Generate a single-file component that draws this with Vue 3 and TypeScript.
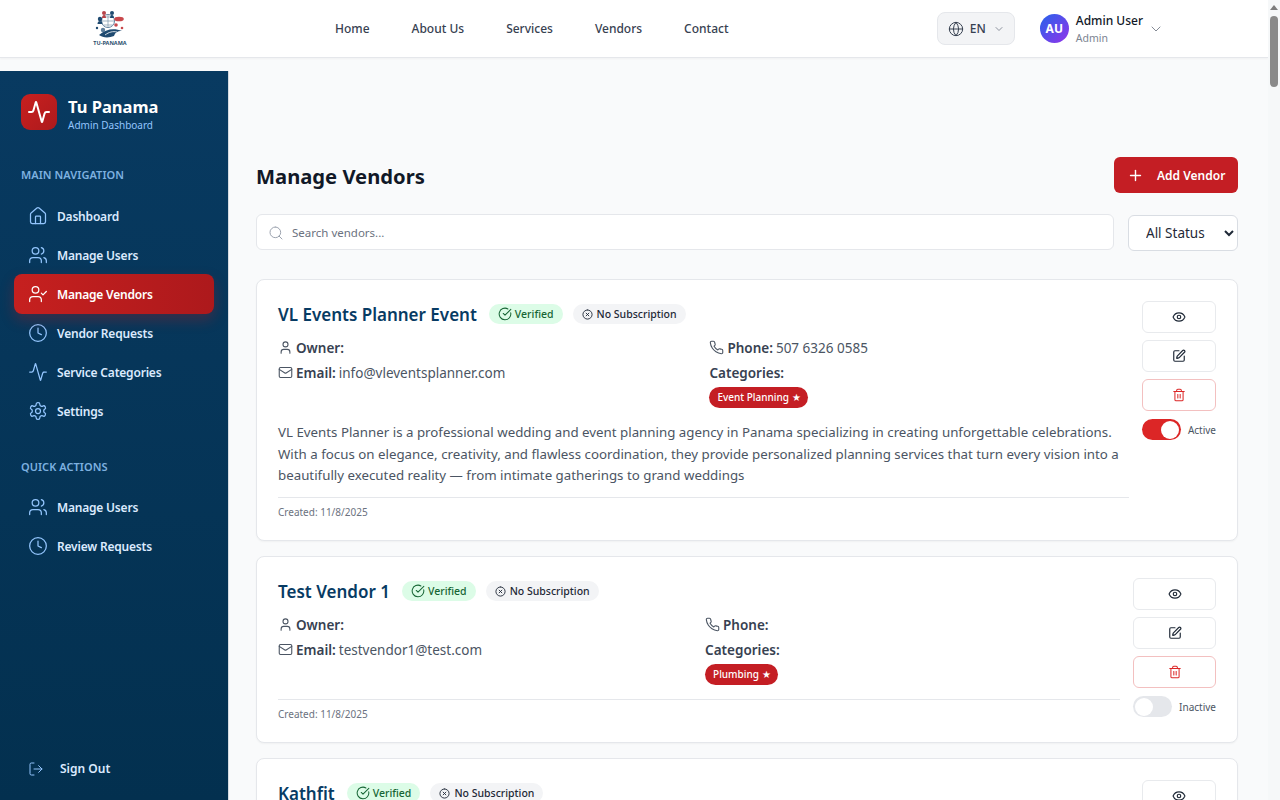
<script setup lang="ts">
import { h } from 'vue'

const iconPaths: Record<string, string[]> = {
  home: ['M15 21v-8a1 1 0 0 0-1-1h-4a1 1 0 0 0-1 1v8', 'M3 10a2 2 0 0 1 .709-1.528l7-5.999a2 2 0 0 1 2.582 0l7 5.999A2 2 0 0 1 21 10v9a2 2 0 0 1-2 2H5a2 2 0 0 1-2-2z'],
  users: ['M16 21v-2a4 4 0 0 0-4-4H6a4 4 0 0 0-4 4v2', 'M9 3a4 4 0 1 0 0 8 4 4 0 1 0 0-8', 'M22 21v-2a4 4 0 0 0-3-3.87', 'M16 3.13a4 4 0 0 1 0 7.75'],
  userCheck: ['M16 21v-2a4 4 0 0 0-4-4H6a4 4 0 0 0-4 4v2', 'M9 3a4 4 0 1 0 0 8 4 4 0 1 0 0-8', 'M16 11l2 2 4-4'],
  clock: ['M12 2a10 10 0 1 0 0 20 10 10 0 1 0 0-20', 'M12 6v6l4 2'],
  activity: ['M22 12h-2.48a2 2 0 0 0-1.93 1.46l-2.35 8.36a.25.25 0 0 1-.48 0L9.24 2.18a.25.25 0 0 0-.48 0l-2.35 8.36A2 2 0 0 1 4.49 12H2'],
  settings: ['M12.22 2h-.44a2 2 0 0 0-2 2v.18a2 2 0 0 1-1 1.73l-.43.25a2 2 0 0 1-2 0l-.15-.08a2 2 0 0 0-2.73.73l-.22.38a2 2 0 0 0 .73 2.73l.15.1a2 2 0 0 1 1 1.72v.51a2 2 0 0 1-1 1.74l-.15.09a2 2 0 0 0-.73 2.73l.22.38a2 2 0 0 0 2.73.73l.15-.08a2 2 0 0 1 2 0l.43.25a2 2 0 0 1 1 1.73V20a2 2 0 0 0 2 2h.44a2 2 0 0 0 2-2v-.18a2 2 0 0 1 1-1.73l.43-.25a2 2 0 0 1 2 0l.15.08a2 2 0 0 0 2.73-.73l.22-.39a2 2 0 0 0-.73-2.73l-.15-.08a2 2 0 0 1-1-1.74v-.5a2 2 0 0 1 1-1.74l.15-.09a2 2 0 0 0 .73-2.73l-.22-.38a2 2 0 0 0-2.73-.73l-.15.08a2 2 0 0 1-2 0l-.43-.25a2 2 0 0 1-1-1.73V4a2 2 0 0 0-2-2z', 'M12 9a3 3 0 1 0 0 6 3 3 0 1 0 0-6'],
  logOut: ['M9 21H5a2 2 0 0 1-2-2V5a2 2 0 0 1 2-2h4', 'M16 17l5-5-5-5', 'M21 12H9'],
  eye: ['M2.062 12.348a1 1 0 0 1 0-.696 10.75 10.75 0 0 1 19.876 0 1 1 0 0 1 0 .696 10.75 10.75 0 0 1-19.876 0', 'M12 9a3 3 0 1 0 0 6 3 3 0 1 0 0-6'],
  edit: ['M12 3H5a2 2 0 0 0-2 2v14a2 2 0 0 0 2 2h14a2 2 0 0 0 2-2v-7', 'M18.375 2.625a1 1 0 0 1 3 3l-9.013 9.014a2 2 0 0 1-.853.505l-2.873.84a.5.5 0 0 1-.62-.62l.84-2.873a2 2 0 0 1 .506-.852z'],
  trash: ['M3 6h18', 'M19 6v14c0 1-1 2-2 2H7c-1 0-2-1-2-2V6', 'M8 6V4c0-1 1-2 2-2h4c1 0 2 1 2 2v2', 'M10 11v6', 'M14 11v6'],
  search: ['M11 3a8 8 0 1 0 0 16 8 8 0 1 0 0-16', 'm21 21-4.3-4.3'],
  globe: ['M12 2a10 10 0 1 0 0 20 10 10 0 1 0 0-20', 'M12 2a14.5 14.5 0 0 0 0 20 14.5 14.5 0 0 0 0-20', 'M2 12h20'],
  chevron: ['m6 9 6 6 6-6'],
  plus: ['M5 12h14', 'M12 5v14'],
  user: ['M19 21v-2a4 4 0 0 0-4-4H9a4 4 0 0 0-4 4v2', 'M12 3a4 4 0 1 0 0 8 4 4 0 1 0 0-8'],
  mail: ['M4 4h16a2 2 0 0 1 2 2v12a2 2 0 0 1-2 2H4a2 2 0 0 1-2-2V6a2 2 0 0 1 2-2z', 'm22 7-8.97 5.7a1.94 1.94 0 0 1-2.06 0L2 7'],
  phone: ['M22 16.92v3a2 2 0 0 1-2.18 2 19.79 19.79 0 0 1-8.63-3.07 19.5 19.5 0 0 1-6-6 19.79 19.79 0 0 1-3.07-8.67A2 2 0 0 1 4.11 2h3a2 2 0 0 1 2 1.72 12.84 12.84 0 0 0 .7 2.81 2 2 0 0 1-.45 2.11L8.09 9.91a16 16 0 0 0 6 6l1.27-1.27a2 2 0 0 1 2.11-.45 12.84 12.84 0 0 0 2.81.7A2 2 0 0 1 22 16.92z'],
  verified: ['M21.801 10A10 10 0 1 1 17 3.335', 'm9 11 3 3L22 4'],
  xCircle: ['M12 2a10 10 0 1 0 0 20 10 10 0 1 0 0-20', 'm15 9-6 6', 'm9 9 6 6'],
}

const Icon = (props: { name: string; size?: number; stroke?: number }) =>
  h(
    'svg',
    {
      width: props.size ?? 16,
      height: props.size ?? 16,
      viewBox: '0 0 24 24',
      fill: 'none',
      stroke: 'currentColor',
      'stroke-width': props.stroke ?? 2,
      'stroke-linecap': 'round',
      'stroke-linejoin': 'round',
      style: 'flex-shrink:0',
    },
    iconPaths[props.name].map((d) => h('path', { d })),
  )
Icon.props = ['name', 'size', 'stroke']

const topLinks = ['Home', 'About Us', 'Services', 'Vendors', 'Contact']

const mainNav = [
  { label: 'Dashboard', icon: 'home' },
  { label: 'Manage Users', icon: 'users' },
  { label: 'Manage Vendors', icon: 'userCheck', active: true },
  { label: 'Vendor Requests', icon: 'clock' },
  { label: 'Service Categories', icon: 'activity' },
  { label: 'Settings', icon: 'settings' },
]

const quickNav = [
  { label: 'Manage Users', icon: 'users' },
  { label: 'Review Requests', icon: 'clock' },
]

const vendors = [
  {
    name: 'VL Events Planner Event',
    phone: '507 6326 0585',
    email: 'info@vleventsplanner.com',
    category: 'Event Planning',
    description:
      'VL Events Planner is a professional wedding and event planning agency in Panama specializing in creating unforgettable celebrations. With a focus on elegance, creativity, and flawless coordination, they provide personalized planning services that turn every vision into a beautifully executed reality — from intimate gatherings to grand weddings',
    active: true,
  },
  {
    name: 'Test Vendor 1',
    phone: '',
    email: 'testvendor1@test.com',
    category: 'Plumbing',
    description: '',
    active: false,
  },
  {
    name: 'Kathfit',
    phone: '',
    email: 'info@kathfit.com',
    category: 'Fitness',
    description: '',
    active: true,
  },
]
</script>

<template>
  <div class="screen">
    <div class="page">
      <header class="topbar">
        <div class="logo">
          <svg width="34" height="30" viewBox="0 0 34 30">
            <circle cx="15" cy="11" r="6.5" fill="#fff" stroke="#5f7f9c" stroke-width="1" />
            <path d="M8.5 11h13M15 4.500v13M10.500 7h9M10.500 15h9" stroke="#7d95ab" stroke-width=".7" />
            <circle cx="11" cy="3" r="2" fill="#b8444a" />
            <path d="M9 8c0-2 1-3 2-3s2 1 2 3z" fill="#b8444a" />
            <circle cx="19" cy="3" r="2" fill="#1f4a70" />
            <path d="M17 8c0-2 1-3 2-3s2 1 2 3z" fill="#1f4a70" />
            <circle cx="7" cy="9" r="2.200" fill="#1f4a70" />
            <path d="M4.500 14c0-2 1-3 2.500-3s2.500 1 2.500 3z" fill="#1f4a70" />
            <ellipse cx="26" cy="9" rx="4.800" ry="2.300" fill="#c9484c" />
            <circle cx="23" cy="15" r="1.800" fill="#c9484c" />
            <circle cx="29" cy="18" r="1.300" fill="#c9484c" />
            <circle cx="4" cy="18" r="1.200" fill="#1f4a70" />
            <circle cx="10" cy="20" r="2.200" fill="#5f7f9c" />
            <path d="M6 25c7-6 15-7 23-4-5 0-7 2-8 5-5 2-11 2-15-1z" fill="#1f4a70" />
            <path d="M12 25c4-3 8-4 12-3" stroke="#fff" stroke-width=".8" fill="none" />
          </svg>
          <span class="logo-text">TU-PANAMA</span>
        </div>
        <nav class="top-links">
          <a v-for="link in topLinks" :key="link">{{ link }}</a>
        </nav>
        <div class="lang">
          <Icon name="globe" :size="16" :stroke="1.5" class="lang-globe" />
          <span>EN</span>
          <Icon name="chevron" :size="12" :stroke="1.5" class="lang-chevron" />
        </div>
        <div class="account">
          <div class="avatar">AU</div>
          <div class="account-text">
            <div class="account-name">Admin User</div>
            <div class="account-role">Admin</div>
          </div>
          <Icon name="chevron" :size="16" :stroke="1.25" class="account-chevron" />
        </div>
      </header>

      <div class="layout">
        <aside class="sidebar">
          <div class="brand">
            <div class="brand-mark"><Icon name="activity" :size="24" /></div>
            <div class="brand-text">
              <div class="brand-name">Tu Panama</div>
              <div class="brand-sub">Admin Dashboard</div>
            </div>
          </div>

          <div class="nav-title">MAIN NAVIGATION</div>
          <a v-for="item in mainNav" :key="item.label" class="nav-item" :class="{ active: item.active }">
            <Icon :name="item.icon" :size="20" :stroke="1.5" class="nav-icon" />
            <span>{{ item.label }}</span>
          </a>

          <div class="nav-title quick">QUICK ACTIONS</div>
          <a v-for="item in quickNav" :key="item.label" class="nav-item">
            <Icon :name="item.icon" :size="20" :stroke="1.5" class="nav-icon" />
            <span>{{ item.label }}</span>
          </a>

          <a class="sign-out">
            <Icon name="logOut" :size="16" :stroke="1.5" class="sign-icon" />
            <span>Sign Out</span>
          </a>
        </aside>

        <main class="content">
          <div class="title-row">
            <h1>Manage Vendors</h1>
            <button class="add-btn">
              <Icon name="plus" :size="17" />
              <span>Add Vendor</span>
            </button>
          </div>

          <div class="filters">
            <div class="search">
              <Icon name="search" :size="16" :stroke="1.5" class="search-icon" />
              <span>Search vendors...</span>
            </div>
            <select class="status">
              <option>All Status</option>
            </select>
          </div>

          <article v-for="vendor in vendors" :key="vendor.name" class="card">
            <div class="card-main">
              <div class="card-head">
                <h2>{{ vendor.name }}</h2>
                <span class="pill verified"><Icon name="verified" :size="14" :stroke="1.75" />Verified</span>
                <span class="pill none"><Icon name="xCircle" :size="11" />No Subscription</span>
              </div>
              <div class="details">
                <div class="detail-col">
                  <div class="detail">
                    <Icon name="user" :size="15" :stroke="1.75" />
                    <b>Owner:</b>
                  </div>
                  <div class="detail">
                    <Icon name="mail" :size="15" :stroke="1.75" />
                    <b>Email:</b> {{ vendor.email }}
                  </div>
                </div>
                <div class="detail-col">
                  <div class="detail">
                    <Icon name="phone" :size="15" :stroke="1.75" />
                    <b>Phone:</b> {{ vendor.phone }}
                  </div>
                  <div>
                    <div class="detail cat-label"><b>Categories:</b></div>
                    <span class="category">{{ vendor.category }} ★</span>
                  </div>
                </div>
              </div>
              <p v-if="vendor.description" class="description">{{ vendor.description }}</p>
              <div class="created">Created: 11/8/2025</div>
            </div>
            <div class="actions">
              <button class="action"><Icon name="eye" :size="14" /></button>
              <button class="action"><Icon name="edit" :size="14" /></button>
              <button class="action danger"><Icon name="trash" :size="14" :stroke="1.75" /></button>
              <div class="toggle-row">
                <span class="toggle" :class="{ on: vendor.active }"><i></i></span>
                <span class="toggle-label">{{ vendor.active ? 'Active' : 'Inactive' }}</span>
              </div>
            </div>
          </article>
        </main>
      </div>
    </div>

    <div class="scrollbar">
      <span class="arrow"></span>
      <span class="thumb"></span>
    </div>
  </div>
</template>

<style>
html,
body {
  margin: 0;
  height: 100%;
  overflow: hidden;
}
</style>

<style scoped>
* {
  box-sizing: border-box;
}

.screen {
  display: flex;
  height: 800px;
  overflow: hidden;
  background: #f9fafb;
  color: #111827;
  font-family: 'Noto Sans', 'Liberation Sans', sans-serif;
}

.page {
  flex: 1;
  min-width: 0;
  display: flex;
  flex-direction: column;
}

.scrollbar {
  width: 12px;
  flex-shrink: 0;
  background: #f6f8f9;
  display: flex;
  flex-direction: column;
  align-items: center;
  padding-top: 5px;
}

.arrow {
  width: 0;
  height: 0;
  border-left: 4px solid transparent;
  border-right: 4px solid transparent;
  border-bottom: 5px solid #7d7d7d;
}

.thumb {
  width: 8px;
  height: 71px;
  margin-top: 6px;
  background: #8a8a8a;
  border-radius: 4px;
}

/* top bar */
.topbar {
  height: 58px;
  flex-shrink: 0;
  display: flex;
  align-items: center;
  background: #fff;
  border-bottom: 1px solid #e5e7eb;
  box-shadow: 0 1px 2px rgba(0, 0, 0, 0.04);
  padding: 0 104px 0 93px;
}

.logo {
  width: 34px;
  display: flex;
  flex-direction: column;
  align-items: center;
  margin-top: -1px;
}

.logo-text {
  font-size: 5.500px;
  font-weight: 700;
  line-height: 6px;
  color: #2c4f6e;
  white-space: nowrap;
}

.top-links {
  display: flex;
  gap: 42px;
  margin-left: 208px;
  font-size: 12px;
  font-weight: 500;
  color: #374151;
}

.lang {
  display: flex;
  align-items: center;
  width: 78px;
  height: 33px;
  margin-left: auto;
  padding-left: 10px;
  background: #f3f4f6;
  border: 1px solid #e5e7eb;
  border-radius: 8px;
  font-size: 12px;
  font-weight: 500;
  color: #374151;
}

.lang-globe {
  margin-right: 6px;
}

.lang-chevron {
  margin-left: 7px;
  color: #6b7280;
}

.account {
  display: flex;
  align-items: center;
  margin-left: 25px;
}

.avatar {
  width: 29px;
  height: 29px;
  border-radius: 50%;
  background: linear-gradient(135deg, #2563eb, #9333ea);
  color: #fff;
  font-size: 12px;
  font-weight: 700;
  display: flex;
  align-items: center;
  justify-content: center;
}

.account-text {
  margin-left: 7px;
  padding-top: 2px;
}

.account-name {
  font-size: 12px;
  font-weight: 500;
  line-height: 16px;
  color: #111827;
}

.account-role {
  margin-top: 1px;
  font-size: 10.500px;
  line-height: 16px;
  color: #7b8491;
}

.account-chevron {
  margin-left: 5px;
  color: #6b7280;
}

/* sidebar */
.layout {
  flex: 1;
  min-height: 0;
  display: flex;
  align-items: flex-start;
  margin-top: 13px;
}

.sidebar {
  width: 228px;
  height: 729px;
  flex-shrink: 0;
  display: flex;
  flex-direction: column;
  padding: 23px 14px 0;
  background: linear-gradient(180deg, #083a61 0%, #03304f 100%);
  box-shadow: 1px 0 0 #d5dbe1;
  color: #dbeafe;
}

.brand {
  display: flex;
  align-items: flex-start;
  gap: 11px;
  padding-left: 7px;
  margin-bottom: 34px;
}

.brand-mark {
  width: 36px;
  height: 36px;
  border-radius: 9px;
  background: linear-gradient(135deg, #c8201f, #ad1a1d);
  color: #fff;
  display: flex;
  align-items: center;
  justify-content: center;
}

.brand-text {
  padding-top: 2px;
}

.brand-name {
  font-size: 16.500px;
  font-weight: 700;
  line-height: 21px;
  color: #fff;
}

.brand-sub {
  font-size: 10px;
  line-height: 16px;
  color: #93c5fd;
}

.nav-title {
  padding-left: 7px;
  margin-bottom: 13px;
  font-size: 11px;
  font-weight: 600;
  line-height: 16px;
  color: #7eb1e0;
  letter-spacing: 0.05px;
}

.nav-title.quick {
  margin-top: 29px;
  margin-bottom: 12px;
}

.nav-item {
  display: flex;
  align-items: center;
  height: 40px;
  margin-bottom: -1px;
  padding-left: 14px;
  gap: 9px;
  border-radius: 8px;
  font-size: 12px;
  font-weight: 600;
  letter-spacing: -0.2px;
  color: #dbeafe;
}

.nav-item.active {
  position: relative;
  background: linear-gradient(90deg, #c6201f, #ad191c);
  color: #fff;
  box-shadow: 0 6px 14px rgba(185, 28, 28, 0.3);
}

.nav-icon,
.sign-icon {
  color: #93c5fd;
}

.active .nav-icon {
  color: #fff;
}

.sign-out {
  margin-top: auto;
  margin-bottom: 23px;
  display: flex;
  align-items: center;
  gap: 16px;
  padding-left: 14px;
  font-size: 12px;
  font-weight: 600;
  color: #dbeafe;
}

/* content */
.content {
  flex: 1;
  min-width: 0;
  padding: 86px 30px 0 28px;
}

.title-row {
  display: flex;
  align-items: center;
  justify-content: space-between;
  margin-bottom: 21px;
}

h1 {
  margin: 2px 0 0;
  font-size: 20.200px;
  font-weight: 700;
  color: #111827;
}

.add-btn {
  display: flex;
  align-items: center;
  gap: 13px;
  width: 124px;
  height: 36px;
  padding: 0 0 0 13px;
  border: none;
  border-radius: 6px;
  background: #c41e24;
  color: #fff;
  font-family: inherit;
  font-size: 12px;
  font-weight: 600;
}

.filters {
  display: flex;
  gap: 14px;
  margin-bottom: 28px;
}

.search {
  flex: 1;
  height: 36px;
  display: flex;
  align-items: center;
  gap: 8px;
  padding: 1px 0 0 11px;
  background: #fff;
  border: 1px solid #e5e7eb;
  border-radius: 6px;
  font-size: 11.500px;
  color: #6b7280;
}

.search-icon {
  color: #9ca3af;
}

.status {
  width: 110px;
  height: 36px;
  margin-top: 1px;
  padding-left: 13px;
  background: #fff;
  border: 1px solid #d9dde3;
  border-radius: 6px;
  font-family: inherit;
  font-size: 13.500px;
  color: #1f2937;
}

.card {
  display: flex;
  gap: 13px;
  margin-bottom: 15px;
  padding: 22px 21px 20px;
  background: #fff;
  border: 1px solid #e5e7eb;
  border-radius: 8px;
  box-shadow: 0 1px 2px rgba(0, 0, 0, 0.04);
}

.card-main {
  flex: 1;
  min-width: 0;
}

.card-head {
  display: flex;
  align-items: center;
  margin-bottom: 9px;
}

h2 {
  margin: 0 12px 0 0;
  font-size: 17px;
  font-weight: 600;
  line-height: 26px;
  color: #073b63;
}

.pill {
  display: flex;
  align-items: center;
  gap: 3px;
  height: 20px;
  margin-top: -2px;
  padding: 0 9px;
  border-radius: 10px;
  font-size: 10.500px;
  font-weight: 500;
}

.pill.verified {
  margin-right: 10px;
  background: #dcfce7;
  color: #166534;
}

.pill.none {
  gap: 4px;
  background: #f3f4f6;
  color: #1f2937;
}

.details {
  display: grid;
  grid-template-columns: 1fr 1fr;
  column-gap: 12px;
  font-size: 13.500px;
  color: #4b5563;
}

.detail-col {
  display: flex;
  flex-direction: column;
  gap: 4px;
}

.detail {
  display: flex;
  align-items: center;
  gap: 3px;
  min-height: 21px;
}

.detail b {
  font-weight: 600;
  color: #374151;
}

.cat-label {
  margin-bottom: 4px;
}

.category {
  display: block;
  width: fit-content;
  height: 21px;
  padding: 0 7px 0 8px;
  border-radius: 11px;
  background: #c41e24;
  color: #fff;
  font-size: 10px;
  font-weight: 500;
  line-height: 21px;
}

.description {
  margin: 14px 0 0;
  font-size: 13.300px;
  line-height: 21.500px;
  color: #4b5563;
}

.created {
  margin-top: 10.500px;
  padding-top: 7px;
  border-top: 1px solid #e5e7eb;
  font-size: 10px;
  line-height: 15px;
  color: #6b7280;
}

.details + .created {
  margin-top: 14px;
}

.actions {
  flex-shrink: 0;
  display: flex;
  flex-direction: column;
  gap: 7px;
  margin-top: -1px;
}

.action {
  height: 32px;
  display: flex;
  align-items: center;
  justify-content: center;
  background: #fff;
  border: 1px solid #e8eaed;
  border-radius: 6px;
  color: #1f2937;
}

.action.danger {
  border-color: #f3c0c0;
  color: #dc2626;
}

.toggle-row {
  display: flex;
  align-items: center;
  gap: 7px;
  margin-top: 1px;
}

.toggle {
  width: 39px;
  height: 21px;
  border-radius: 11px;
  background: #e5e7eb;
  padding: 1.500px;
  display: block;
}

.toggle.on {
  background: #dc2626;
}

.toggle i {
  display: block;
  width: 18px;
  height: 18px;
  border-radius: 50%;
  background: #fff;
}

.toggle.on i {
  margin-left: 18px;
}

.toggle-label {
  font-size: 10px;
  color: #4b5563;
}
</style>
